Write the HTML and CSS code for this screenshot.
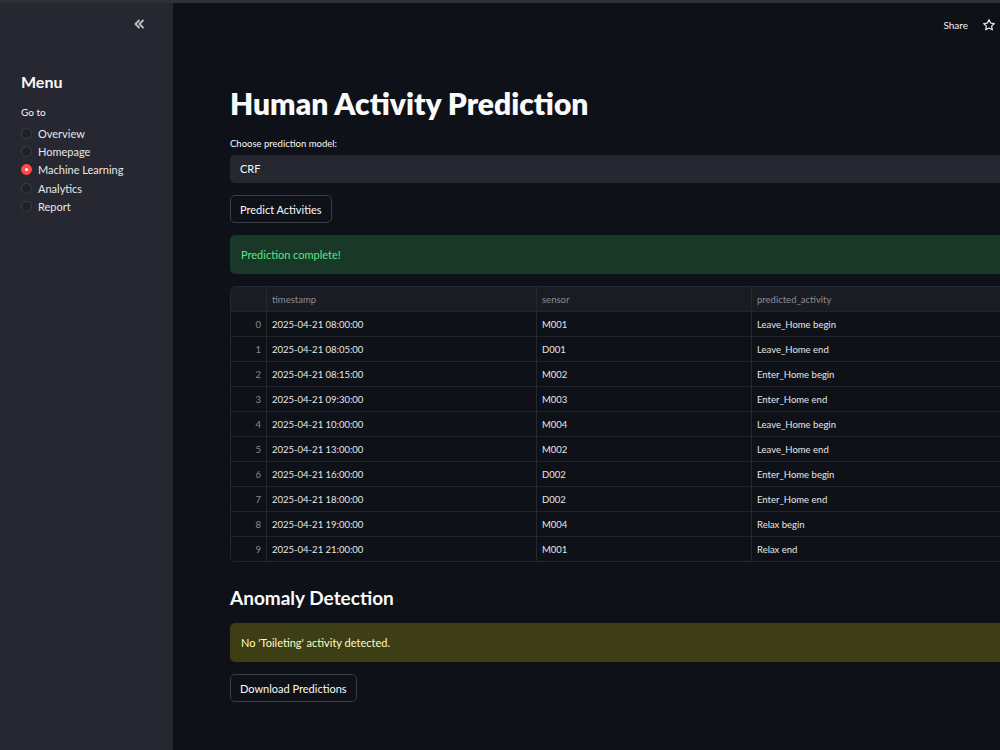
FILE: index.html
```html
<!DOCTYPE html>
<html lang="en">
<head>
  <meta charset="UTF-8" />
  <title>Human Activity Prediction</title>
  <link rel="stylesheet" href="styles.css">
</head>
<body>
  <div class="topline"></div>
  <div class="app">
    <aside class="sidebar">
      <div class="collapse">
        <svg width="12" height="12" viewBox="0 0 12 12"><path d="M6 2.5 L2.5 6 L6 9.5 M10 2.5 L6.5 6 L10 9.5" fill="none" stroke="#bdbec4" stroke-width="1.8" stroke-linecap="round" stroke-linejoin="round"/></svg>
      </div>
      <h3 class="menu-title">Menu</h3>
      <div class="goto">Go to</div>
      <ul class="radios">
        <li><span class="dot"></span>Overview</li>
        <li><span class="dot"></span>Homepage</li>
        <li><span class="dot on"></span>Machine Learning</li>
        <li><span class="dot"></span>Analytics</li>
        <li><span class="dot"></span>Report</li>
      </ul>
    </aside>

    <main class="main">
      <div class="toolbar">
        <span class="share">Share</span>
        <svg width="14" height="14" viewBox="0 0 24 24"><path d="M12 2.8l2.8 5.9 6.4.8-4.7 4.4 1.2 6.4L12 17.2l-5.7 3.1 1.2-6.4-4.7-4.4 6.4-.8z" fill="none" stroke="#f0f0f0" stroke-width="2" stroke-linejoin="round"/></svg>
      </div>

      <div class="content">
        <h1>Human Activity Prediction</h1>

        <label class="field-label">Choose prediction model:</label>
        <div class="select">CRF</div>

        <button class="btn">Predict Activities</button>

        <div class="alert success">Prediction complete!</div>

        <table class="grid">
          <thead>
            <tr><th class="idx"></th><th class="c1">timestamp</th><th class="c2">sensor</th><th>predicted_activity</th></tr>
          </thead>
          <tbody>
            <tr><td class="idx">0</td><td>2025-04-21 08:00:00</td><td>M001</td><td>Leave_Home begin</td></tr>
            <tr><td class="idx">1</td><td>2025-04-21 08:05:00</td><td>D001</td><td>Leave_Home end</td></tr>
            <tr><td class="idx">2</td><td>2025-04-21 08:15:00</td><td>M002</td><td>Enter_Home begin</td></tr>
            <tr><td class="idx">3</td><td>2025-04-21 09:30:00</td><td>M003</td><td>Enter_Home end</td></tr>
            <tr><td class="idx">4</td><td>2025-04-21 10:00:00</td><td>M004</td><td>Leave_Home begin</td></tr>
            <tr><td class="idx">5</td><td>2025-04-21 13:00:00</td><td>M002</td><td>Leave_Home end</td></tr>
            <tr><td class="idx">6</td><td>2025-04-21 16:00:00</td><td>D002</td><td>Enter_Home begin</td></tr>
            <tr><td class="idx">7</td><td>2025-04-21 18:00:00</td><td>D002</td><td>Enter_Home end</td></tr>
            <tr><td class="idx">8</td><td>2025-04-21 19:00:00</td><td>M004</td><td>Relax begin</td></tr>
            <tr><td class="idx">9</td><td>2025-04-21 21:00:00</td><td>M001</td><td>Relax end</td></tr>
          </tbody>
        </table>

        <h2>Anomaly Detection</h2>
        <div class="alert warning">No 'Toileting' activity detected.</div>

        <button class="btn">Download Predictions</button>
      </div>
    </main>
  </div>
</body>
</html>
```

FILE: styles.css
```css
body {
  margin: 0;
  background: #0e1117;
  color: #fafafa;
  font-family: Lato, "Noto Sans", sans-serif;
  height: 750px;
  overflow: hidden;
}

.topline {
  height: 3px;
  background: #2f3034;
}

.app {
  display: flex;
  height: 747px;
}

.sidebar {
  width: 173px;
  flex-shrink: 0;
  background: #262730;
  padding: 0 21px;
  box-sizing: border-box;
}

.collapse {
  display: flex;
  justify-content: flex-end;
  padding: 15px 7px 0 0;
  height: 14px;
}

.menu-title {
  margin: 39px 0 0;
  font-size: 16px;
  font-weight: 700;
  line-height: 22px;
}

.goto {
  margin-top: 12px;
  font-size: 10px;
  line-height: 14px;
}

.radios {
  list-style: none;
  padding: 0;
  margin: 5px 0 0;
}

.radios li {
  display: flex;
  align-items: center;
  gap: 6px;
  height: 18.4px;
  font-size: 11px;
  color: #e8e8ea;
}

.dot {
  width: 11px;
  height: 11px;
  border-radius: 50%;
  border: 1px solid #3d3e47;
  background: #1f2028;
  box-sizing: border-box;
  position: relative;
}

.dot.on {
  background: #ff4b4b;
  border-color: #ff4b4b;
}

.dot.on::after {
  content: "";
  position: absolute;
  left: 3px;
  top: 3px;
  width: 3px;
  height: 3px;
  border-radius: 50%;
  background: #fff;
}

.main {
  flex: 1;
  overflow: hidden;
  position: relative;
}

.toolbar {
  display: flex;
  justify-content: flex-end;
  align-items: center;
  gap: 14px;
  height: 14px;
  padding: 15px 4px 0 0;
  font-size: 10px;
}

.share {
  color: #f0f0f0;
}

.content {
  width: 850px;
  padding: 0 0 0 57px;
}

h1 {
  margin: 51px 0 0;
  font-size: 30px;
  font-weight: 800;
  line-height: 40px;
}

.field-label {
  display: block;
  margin-top: 14px;
  font-size: 9.5px;
  line-height: 14px;
}

.select {
  margin-top: 4px;
  height: 28px;
  line-height: 28px;
  background: #262730;
  border-radius: 5px;
  padding-left: 10px;
  font-size: 11px;
}

.btn {
  display: block;
  margin-top: 12px;
  height: 28px;
  padding: 0 9px;
  background: #0e1117;
  color: #fafafa;
  border: 1px solid #3b3d45;
  border-radius: 5px;
  font-family: inherit;
  font-size: 11px;
}

.alert {
  margin-top: 12px;
  height: 39px;
  line-height: 39px;
  border-radius: 5px;
  padding-left: 11px;
  font-size: 11px;
}

.success {
  background: #193827;
  color: #5ce488;
}

.warning {
  background: #3d3d16;
  color: #ffffc2;
}

.grid {
  margin-top: 12px;
  width: 100%;
  border-collapse: separate;
  border-spacing: 0;
  border: 1px solid #262830;
  border-radius: 5px;
  font-size: 9.5px;
  color: #e6e6e8;
}

.grid th,
.grid td {
  height: 24px;
  padding: 0 5px;
  text-align: left;
  border-bottom: 1px solid #22242c;
  border-left: 1px solid #262830;
}

.grid tr > :first-child {
  border-left: none;
}

.grid tbody tr:last-child td {
  border-bottom: none;
}

.grid th {
  background: #1a1c23;
  font-weight: 400;
  color: #8b8d94;
}

.grid .idx {
  width: 25px;
  text-align: right;
  color: #8b8d94;
}

.grid .c1 {
  width: 259px;
}

.grid .c2 {
  width: 204px;
}

h2 {
  margin: 23px 0 0;
  font-size: 19px;
  font-weight: 700;
  line-height: 26px;
}
```
